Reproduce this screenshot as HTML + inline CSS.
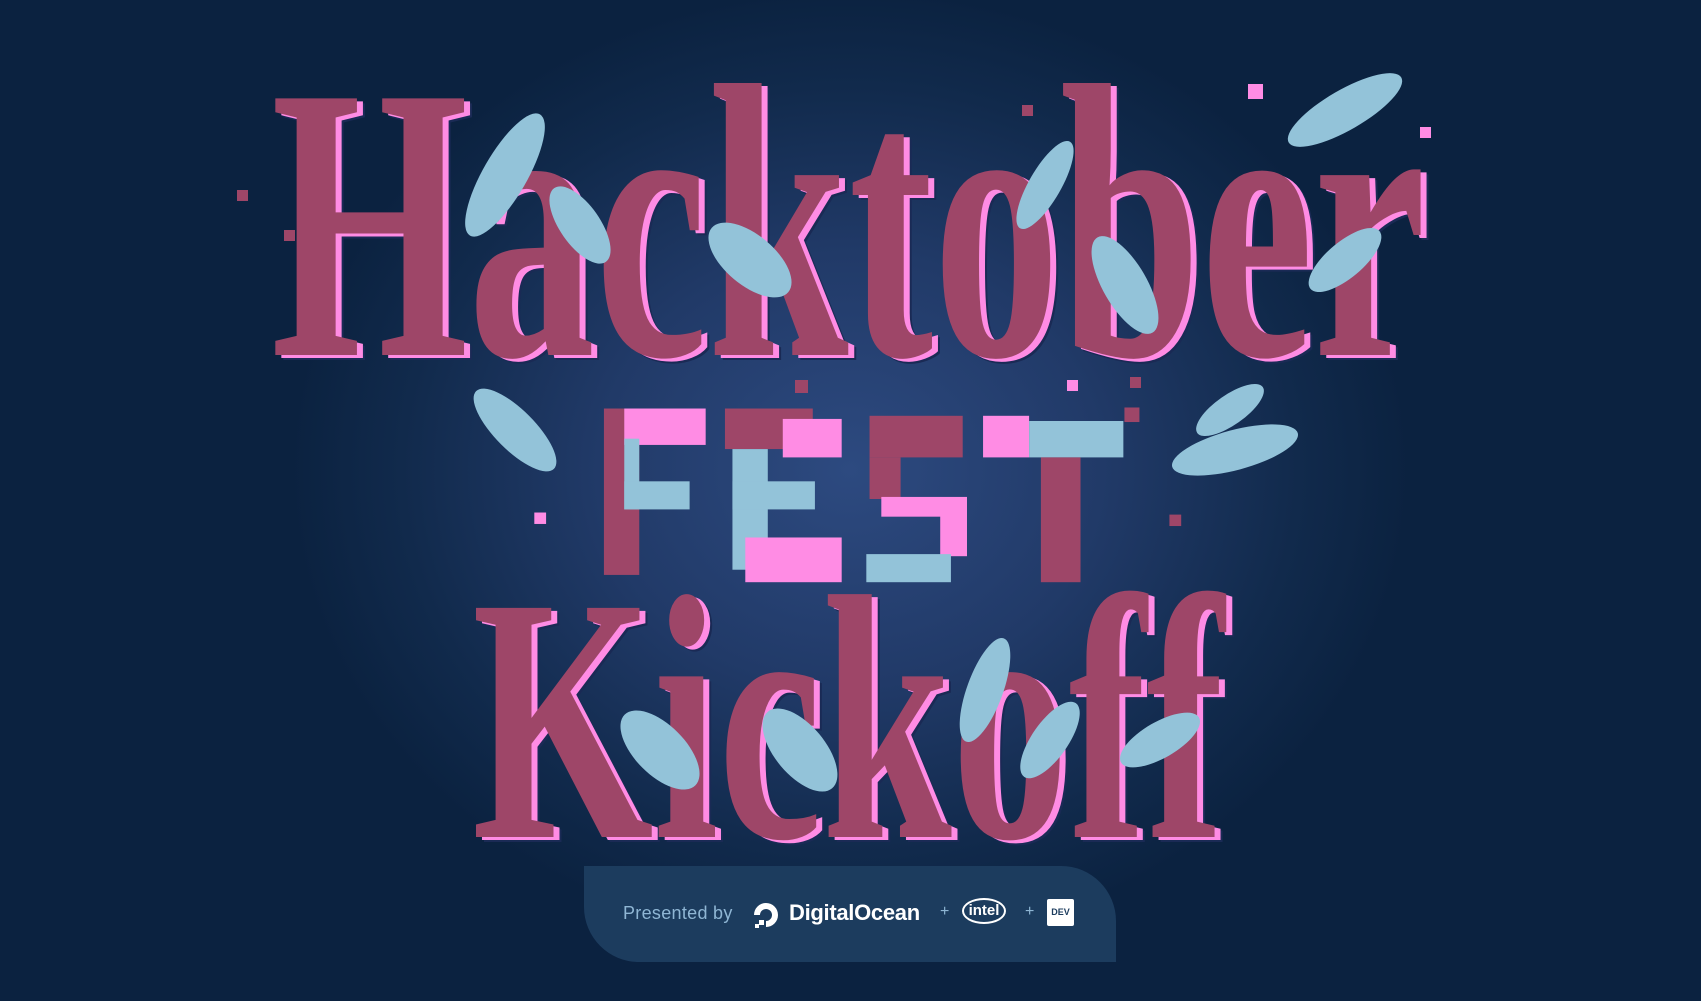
<!DOCTYPE html>
<html><head><meta charset="utf-8"><style>
html,body{margin:0;padding:0}
body{width:1701px;height:1001px;overflow:hidden;background:radial-gradient(ellipse 560px 480px at 850px 470px,#2d4a80 0%,#213a68 45%,#112a4c 80%,#0b2240 100%);font-family:"Liberation Sans",sans-serif;position:relative}
.bar{position:absolute;left:584px;top:866px;width:532px;height:96px;background:#1c3c5e;border-radius:0 55px 0 55px}
.bar .p{position:absolute;left:39px;top:37px;color:#8fb6d4;font-size:18px;letter-spacing:.3px}
.bar .do{position:absolute;left:205px;top:34px;color:#fff;font-weight:bold;font-size:22px;letter-spacing:-.3px}
.plus{position:absolute;top:37px;color:#8fb6d4;font-size:16px}
.intel{position:absolute;top:32px;width:44px;height:26px;border:2px solid #fff;border-radius:50%;color:#fff;font-size:15px;font-weight:bold;text-align:center;line-height:22px;box-sizing:border-box}
</style></head><body>
<svg width="1701" height="1001" style="position:absolute;left:0;top:0">
<g font-family="Liberation Serif" font-weight="bold">
<g font-size="392">
<text x="279" y="360" textLength="1155" lengthAdjust="spacingAndGlyphs" fill="#1a2a55">Hacktober</text>
<text x="277" y="358" textLength="1155" lengthAdjust="spacingAndGlyphs" fill="#ff8ce4">Hacktober</text>
<text x="271" y="355" textLength="1155" lengthAdjust="spacingAndGlyphs" fill="#9e4668">Hacktober</text>
</g>
<g font-size="350">
<text x="480" y="842" textLength="752" lengthAdjust="spacingAndGlyphs" fill="#1a2a55">Kickoff</text>
<text x="478" y="840" textLength="752" lengthAdjust="spacingAndGlyphs" fill="#ff8ce4">Kickoff</text>
<text x="472" y="837" textLength="752" lengthAdjust="spacingAndGlyphs" fill="#9e4668">Kickoff</text>
</g>
</g>
<g transform="translate(590 395) scale(1.071 1.04) translate(-590 -395)">
<rect x="603" y="408" width="33" height="160" fill="#9e4668"/>
<rect x="622" y="408" width="76" height="35" fill="#ff8ce4"/>
<rect x="622" y="437" width="14" height="68" fill="#93c3d9"/>
<rect x="622" y="478" width="61" height="27" fill="#93c3d9"/>
<rect x="716" y="408" width="82" height="39" fill="#9e4668"/>
<rect x="770" y="418" width="55" height="37" fill="#ff8ce4"/>
<rect x="723" y="447" width="33" height="116" fill="#93c3d9"/>
<rect x="723" y="478" width="77" height="27" fill="#93c3d9"/>
<rect x="735" y="532" width="90" height="43" fill="#ff8ce4"/>
<rect x="851" y="415" width="87" height="40" fill="#9e4668"/>
<rect x="851" y="455" width="29" height="40" fill="#9e4668"/>
<rect x="862" y="493" width="80" height="19" fill="#ff8ce4"/>
<rect x="917" y="505" width="25" height="45" fill="#ff8ce4"/>
<rect x="848" y="548" width="79" height="27" fill="#93c3d9"/>
<rect x="957" y="415" width="43" height="40" fill="#ff8ce4"/>
<rect x="1000" y="420" width="88" height="35" fill="#93c3d9"/>
<rect x="1011" y="455" width="37" height="120" fill="#9e4668"/>
<rect x="1089" y="407" width="14" height="14" fill="#9e4668"/>
<rect x="1131" y="510" width="11" height="11" fill="#9e4668"/>
<rect x="538" y="508" width="11" height="11" fill="#ff8ce4"/>
</g>
<g fill="#93c3d9">
<ellipse cx="505" cy="175" rx="22" ry="70" transform="rotate(30 505 175)"/>
<ellipse cx="580" cy="225" rx="20" ry="45" transform="rotate(-35 580 225)"/>
<ellipse cx="750" cy="260" rx="25" ry="50" transform="rotate(-50 750 260)"/>
<ellipse cx="1045" cy="185" rx="16" ry="50" transform="rotate(30 1045 185)"/>
<ellipse cx="1125" cy="285" rx="22" ry="55" transform="rotate(-30 1125 285)"/>
<ellipse cx="1345" cy="110" rx="20" ry="65" transform="rotate(60 1345 110)"/>
<ellipse cx="1345" cy="260" rx="18" ry="45" transform="rotate(50 1345 260)"/>
<ellipse cx="515" cy="430" rx="20" ry="55" transform="rotate(-45 515 430)"/>
<ellipse cx="1235" cy="450" rx="20" ry="65" transform="rotate(75 1235 450)"/>
<ellipse cx="1230" cy="410" rx="15" ry="40" transform="rotate(55 1230 410)"/>
<ellipse cx="660" cy="750" rx="25" ry="50" transform="rotate(-45 660 750)"/>
<ellipse cx="800" cy="750" rx="25" ry="50" transform="rotate(-40 800 750)"/>
<ellipse cx="985" cy="690" rx="18" ry="55" transform="rotate(20 985 690)"/>
<ellipse cx="1050" cy="740" rx="18" ry="45" transform="rotate(35 1050 740)"/>
<ellipse cx="1160" cy="740" rx="18" ry="45" transform="rotate(60 1160 740)"/>
</g>
<g fill="#9e4668"><rect x="237" y="190" width="11" height="11"/><rect x="284" y="230" width="11" height="11"/><rect x="1022" y="105" width="11" height="11"/><rect x="1130" y="377" width="11" height="11"/><rect x="795" y="380" width="13" height="13"/></g>
<g fill="#ff8ce4"><rect x="1248" y="84" width="15" height="15"/><rect x="1420" y="127" width="11" height="11"/><rect x="1067" y="380" width="11" height="11"/></g>
</svg>
<div class="bar">
<div class="p">Presented by</div>
<svg style="position:absolute;left:167px;top:34px" width="30" height="30" viewBox="0 0 30 30"><path d="M15 27 A12 12 0 1 0 3 15 h6 a6 6 0 1 1 6 6z" fill="#fff"/><rect x="8" y="20" width="5" height="5" fill="#fff"/><rect x="4" y="24" width="4" height="4" fill="#fff"/></svg>
<div class="do">DigitalOcean</div>
<div class="plus" style="left:356px">+</div>
<div class="intel" style="left:378px">intel</div>
<div class="plus" style="left:441px">+</div>
<div style="position:absolute;left:463px;top:33px;width:27px;height:27px;background:#fff;border-radius:2px;font-size:9px;font-weight:bold;line-height:27px;text-align:center;color:#1c3c5e">DEV</div>
</div>
</body></html>
